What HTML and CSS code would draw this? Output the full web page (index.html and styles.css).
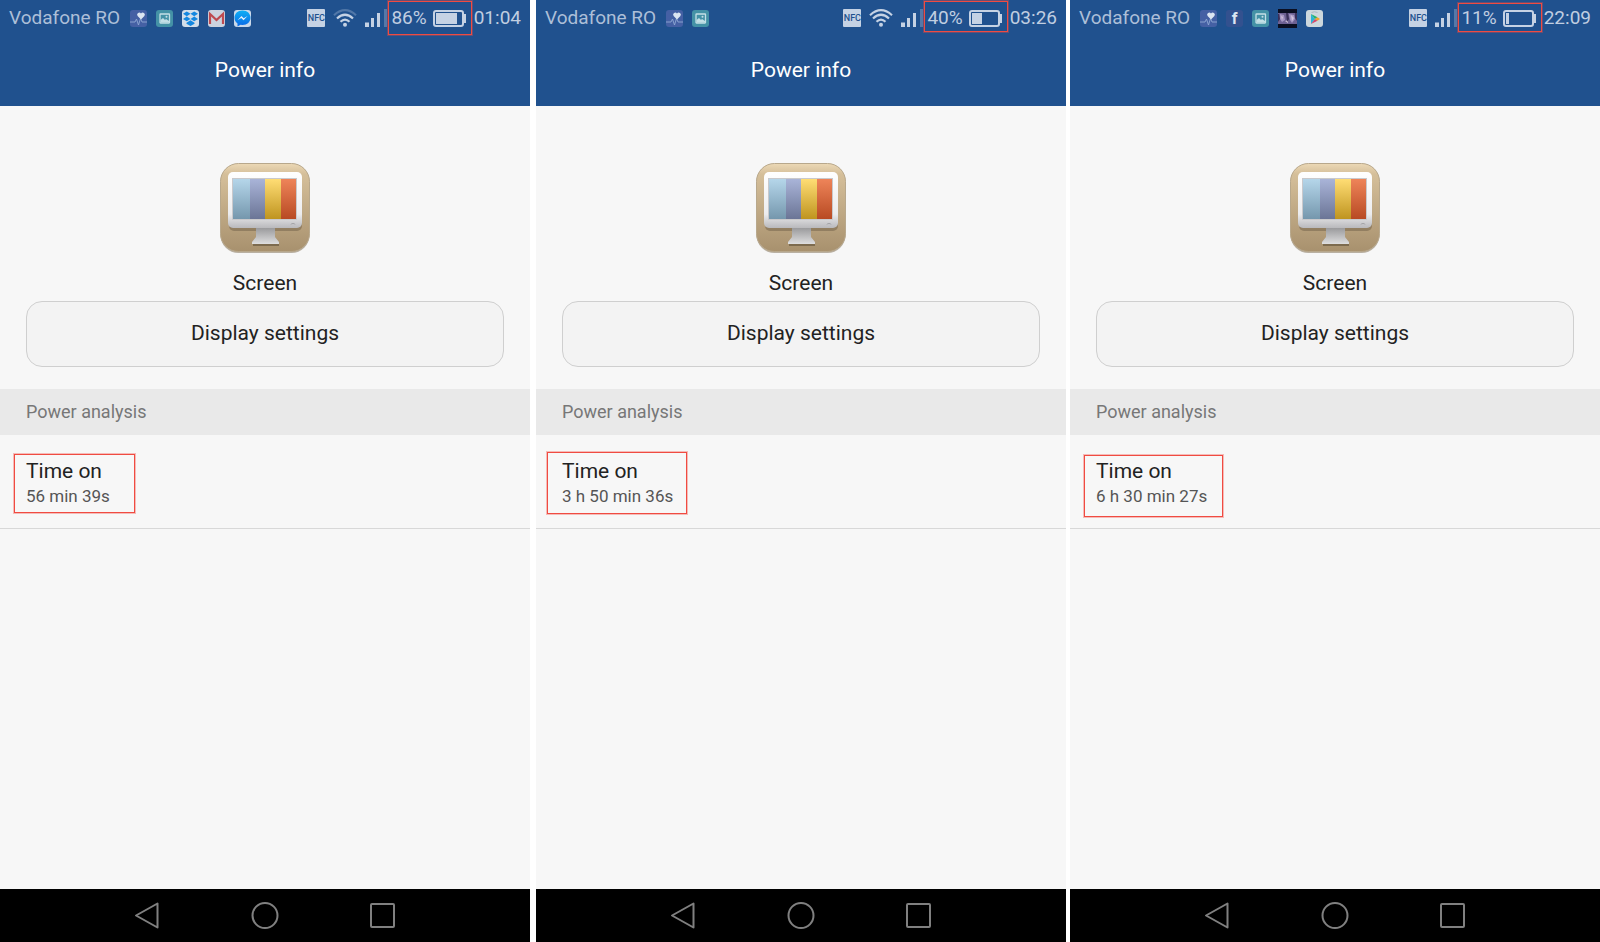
FILE: index.html
```html
<!DOCTYPE html>
<html lang="en">
  <head>
    <meta charset="UTF-8" />
    <meta name="viewport" content="width=device-width, initial-scale=1.0" />
    <title>Power info</title>
    <link rel="stylesheet" href="styles.css">
  </head>
  <body>
    <!-- shared icons -->
    <svg class="defs" aria-hidden="true">
      <defs>
        <linearGradient id="gBeige" x1="0" y1="0" x2="0" y2="1">
          <stop offset="0" stop-color="#ecd9b6" />
          <stop offset="0.12" stop-color="#d5bf9a" />
          <stop offset="1" stop-color="#a8916e" />
        </linearGradient>
        <linearGradient id="gFrame" x1="0" y1="0" x2="0" y2="1">
          <stop offset="0" stop-color="#ffffff" />
          <stop offset="0.75" stop-color="#ececee" />
          <stop offset="1" stop-color="#b9b9bc" />
        </linearGradient>
        <linearGradient id="gStand" x1="0" y1="0" x2="0" y2="1">
          <stop offset="0" stop-color="#9a9a9c" />
          <stop offset="1" stop-color="#dededf" />
        </linearGradient>
        <linearGradient id="gSky" x1="0" y1="0" x2="0" y2="1">
          <stop offset="0" stop-color="#b5d6ea" />
          <stop offset="1" stop-color="#7597ad" />
        </linearGradient>
        <linearGradient id="gViolet" x1="0" y1="0" x2="0" y2="1">
          <stop offset="0" stop-color="#a9b4d8" />
          <stop offset="1" stop-color="#6b7596" />
        </linearGradient>
        <linearGradient id="gYellow" x1="0" y1="0" x2="0" y2="1">
          <stop offset="0" stop-color="#ffdd74" />
          <stop offset="1" stop-color="#bf941f" />
        </linearGradient>
        <linearGradient id="gRed" x1="0" y1="0" x2="0" y2="1">
          <stop offset="0" stop-color="#ee8459" />
          <stop offset="1" stop-color="#b84a23" />
        </linearGradient>
        <linearGradient id="gMessenger" x1="0" y1="0" x2="0" y2="1">
          <stop offset="0" stop-color="#0fb0f5" />
          <stop offset="1" stop-color="#0a68e6" />
        </linearGradient>
      </defs>

      <symbol id="screen" viewBox="0 0 90 90">
        <rect x="0.5" y="1" width="89" height="89" rx="18" fill="#8f8069" opacity="0.6" />
        <rect x="0.5" y="0.5" width="89" height="88" rx="18" fill="url(#gBeige)" stroke="#b8a88c" />
        <rect x="9" y="12" width="73" height="56" rx="5" fill="#6f5f48" opacity="0.5" />
        <rect x="8" y="9" width="74" height="56" rx="5" fill="url(#gFrame)" />
        <rect x="12" y="15" width="65" height="42" fill="#c9c9cc" />
        <rect x="13" y="16" width="17" height="40" fill="url(#gSky)" />
        <rect x="30" y="16" width="15" height="40" fill="url(#gViolet)" />
        <rect x="45" y="16" width="16" height="40" fill="url(#gYellow)" />
        <rect x="61" y="16" width="15" height="40" fill="url(#gRed)" />
        <path d="M71 61.500a2 1 0 0 1 4 0" fill="none" stroke="#a2a2a5" />
        <path d="M33 80h26v3H33z" fill="#5e5039" opacity="0.6" />
        <path d="M36 65h19v9l4 5v2H32v-2l4-5z" fill="url(#gStand)" />
      </symbol>

      <symbol id="health" viewBox="0 0 17 17">
        <rect width="17" height="17" rx="3" fill="#4560a4" />
        <path d="M0 12h5l1.500-3 2 6 2-6.500 1.500 3.500h5" fill="none" stroke="#8fa8d4" stroke-width="0.9" />
        <path d="M11 9.500L7.600 6a2.100 2.100 0 0 1 3.400-2.500A2.100 2.100 0 0 1 14.400 6z" fill="#dce5f2" />
      </symbol>
      <symbol id="gallery" viewBox="0 0 17 17">
        <rect width="17" height="17" rx="3" fill="#4492a6" />
        <rect x="4" y="4" width="9.500" height="9" rx="0.5" fill="none" stroke="#c3dfe6" stroke-width="1.300" />
        <path d="M4.500 12.500V10l2.500-2 2 2 1-1 3 2v1.500z" fill="#c3dfe6" />
        <circle cx="10.500" cy="6.800" r="1" fill="#c3dfe6" />
      </symbol>
      <symbol id="dropbox" viewBox="0 0 17 17">
        <rect width="17" height="17" rx="3" fill="#d3deea" />
        <path d="M4.800 1.500l3.700 2.300-3.700 2.400L1 3.800zM12.200 1.500L16 3.800l-3.800 2.400-3.700-2.400zM4.800 6.600l3.700 2.300-3.700 2.400L1 8.900zM12.200 6.600L16 8.900l-3.800 2.400-3.700-2.400zM8.500 10.200l4 2.500v1l-4 2.300-4-2.300v-1z" fill="#1487e0" />
      </symbol>
      <symbol id="mail" viewBox="0 0 17 17">
        <rect width="17" height="17" rx="3" fill="#ccd3df" />
        <path d="M2 14V4l6.500 6L15 4v10" fill="none" stroke="#be4a50" stroke-width="2.200" />
      </symbol>
      <symbol id="messenger" viewBox="0 0 17 17">
        <rect width="17" height="17" rx="3" fill="#cbd9ea" />
        <path d="M8.500 0.500c4.800 0 8 3.200 8 7.300s-3.200 7.200-8 7.200l-2-.2L3.500 16.500v-3C1.500 12 .5 10.200.5 7.800.5 3.700 3.700.5 8.500.5z" fill="url(#gMessenger)" />
        <path d="M3.500 10.200l4-4.200 2.200 2.200L13.500 6l-4 4.200L7.300 8z" fill="#e6f1fb" />
      </symbol>
      <symbol id="play" viewBox="0 0 17 17">
        <rect width="17" height="17" rx="3" fill="#ccd7dd" />
        <path d="M5.500 2.500q3-1.500 6 0" fill="none" stroke="#aab8c2" />
        <path d="M5 4v10l4-5z" fill="#2bb3d6" />
        <path d="M5 4l4 5 2.500-1.800z" fill="#27b36a" />
        <path d="M5 14l4-5 2.500 1.800z" fill="#d6476b" />
        <path d="M9 9l2.500-1.800L14 9l-2.500 1.800z" fill="#f0a52b" />
      </symbol>
      <symbol id="thumb" viewBox="0 0 19 19">
        <rect width="19" height="19" fill="#0b0f22" />
        <rect y="4" width="19" height="11" fill="#6d6193" />
        <path d="M2 5l4 1 1 5-3 2-2-3zM11 5l5 1 1 4-3 4-2-3z" fill="#a596c2" />
        <path d="M3 7l2 1-1 3zM13 6l3 3-2 3zM7 12l3-1v3z" fill="#d3c3dd" />
        <path d="M0 5h1l1 5-2 3zM8 4h2l1 6-2 3zM17 4h2v8l-2-3z" fill="#3a3059" />
      </symbol>

      <symbol id="wifi" viewBox="0 0 24 18">
        <g fill="none" stroke="#c5d2e4" stroke-width="2.200">
          <path class="wifi-outer" d="M1 6.200q11-10 22 0" />
          <path d="M4 9.500q8-7.500 16 0" />
          <path d="M7.500 12.800q4.500-4.500 9 0" />
        </g>
        <circle cx="12" cy="15.800" r="2" fill="#c5d2e4" />
      </symbol>
      <symbol id="signal" viewBox="0 0 22 18">
        <path d="M0 13.500h4V18H0zM6 9h3v9H6zM12 4h3v14h-3z" fill="#c5d2e4" />
        <path d="M19 0h3v18h-3z" fill="#5578a8" />
      </symbol>

      <symbol id="back" viewBox="0 0 28 28">
        <path d="M24.500 1.500v24L3 13.500z" fill="none" stroke="#808080" stroke-width="2" stroke-linejoin="round" />
      </symbol>
      <symbol id="home" viewBox="0 0 28 28">
        <circle cx="14" cy="13.500" r="12.500" fill="none" stroke="#808080" stroke-width="2" />
      </symbol>
      <symbol id="recent" viewBox="0 0 28 28">
        <rect x="2" y="2" width="23" height="23" rx="1" fill="none" stroke="#808080" stroke-width="2" />
      </symbol>
    </svg>

    <main class="phones">
      <section class="phone">
        <header class="header">
          <div class="status">
            <span class="carrier">Vodafone RO</span>
            <div class="apps">
              <svg class="app"><use href="#health" /></svg>
              <svg class="app"><use href="#gallery" /></svg>
              <svg class="app"><use href="#dropbox" /></svg>
              <svg class="app"><use href="#mail" /></svg>
              <svg class="app"><use href="#messenger" /></svg>
            </div>
            <span class="nfc">NFC</span>
            <svg class="wifi weak"><use href="#wifi" /></svg>
            <svg class="signal"><use href="#signal" /></svg>
            <div class="power">
              <span>86%</span>
              <span class="battery"><span class="charge" style="width: 86%"></span></span>
              <span class="mark tall"></span>
            </div>
            <span class="clock">01:04</span>
          </div>
          <h1>Power info</h1>
        </header>
        <div class="content">
          <svg class="screen-icon"><use href="#screen" /></svg>
          <p class="name">Screen</p>
          <button class="settings">Display settings</button>
          <h2>Power analysis</h2>
          <div class="row">
            <div class="time">
              <p class="label">Time on</p>
              <p class="value">56 min 39s</p>
              <span class="mark first"></span>
            </div>
          </div>
        </div>
        <nav class="nav">
          <button aria-label="Back"><svg><use href="#back" /></svg></button>
          <button aria-label="Home"><svg><use href="#home" /></svg></button>
          <button aria-label="Recent apps"><svg><use href="#recent" /></svg></button>
        </nav>
      </section>

      <section class="phone">
        <header class="header">
          <div class="status">
            <span class="carrier">Vodafone RO</span>
            <div class="apps">
              <svg class="app"><use href="#health" /></svg>
              <svg class="app"><use href="#gallery" /></svg>
            </div>
            <span class="nfc">NFC</span>
            <svg class="wifi"><use href="#wifi" /></svg>
            <svg class="signal"><use href="#signal" /></svg>
            <div class="power">
              <span>40%</span>
              <span class="battery"><span class="charge" style="width: 43%"></span></span>
              <span class="mark"></span>
            </div>
            <span class="clock">03:26</span>
          </div>
          <h1>Power info</h1>
        </header>
        <div class="content">
          <svg class="screen-icon"><use href="#screen" /></svg>
          <p class="name">Screen</p>
          <button class="settings">Display settings</button>
          <h2>Power analysis</h2>
          <div class="row">
            <div class="time">
              <p class="label">Time on</p>
              <p class="value">3 h 50 min 36s</p>
              <span class="mark second"></span>
            </div>
          </div>
        </div>
        <nav class="nav">
          <button aria-label="Back"><svg><use href="#back" /></svg></button>
          <button aria-label="Home"><svg><use href="#home" /></svg></button>
          <button aria-label="Recent apps"><svg><use href="#recent" /></svg></button>
        </nav>
      </section>

      <section class="phone">
        <header class="header">
          <div class="status">
            <span class="carrier">Vodafone RO</span>
            <div class="apps">
              <svg class="app"><use href="#health" /></svg>
              <span class="app facebook">f</span>
              <svg class="app"><use href="#gallery" /></svg>
              <svg class="app thumb"><use href="#thumb" /></svg>
              <svg class="app"><use href="#play" /></svg>
            </div>
            <span class="nfc">NFC</span>
            <svg class="signal"><use href="#signal" /></svg>
            <div class="power">
              <span>11%</span>
              <span class="battery"><span class="charge" style="width: 15%"></span></span>
              <span class="mark low"></span>
            </div>
            <span class="clock">22:09</span>
          </div>
          <h1>Power info</h1>
        </header>
        <div class="content">
          <svg class="screen-icon"><use href="#screen" /></svg>
          <p class="name">Screen</p>
          <button class="settings">Display settings</button>
          <h2>Power analysis</h2>
          <div class="row">
            <div class="time">
              <p class="label">Time on</p>
              <p class="value">6 h 30 min 27s</p>
              <span class="mark third"></span>
            </div>
          </div>
        </div>
        <nav class="nav">
          <button aria-label="Back"><svg><use href="#back" /></svg></button>
          <button aria-label="Home"><svg><use href="#home" /></svg></button>
          <button aria-label="Recent apps"><svg><use href="#recent" /></svg></button>
        </nav>
      </section>
    </main>
  </body>
</html>
```

FILE: styles.css
```css
* {
  box-sizing: border-box;
}
body {
  margin: 0;
  background: white;
  font-family: Roboto, sans-serif;
  color: #222;
}
h1,
h2,
p {
  margin: 0;
  font-weight: normal;
}
button {
  font-family: inherit;
  color: inherit;
  cursor: pointer;
}
svg {
  display: block;
}
.defs {
  position: absolute;
  width: 0;
  height: 0;
}

.phones {
  display: grid;
  grid-template-columns: 1fr 6px 1fr 4px 1fr;
  min-height: 100vh;
}
.phone {
  display: flex;
  flex-direction: column;
  background: #f7f7f7;
}
.phone:nth-child(1) {
  grid-column: 1;
}
.phone:nth-child(2) {
  grid-column: 3;
}
.phone:nth-child(3) {
  grid-column: 5;
}

/* header */
.header {
  height: 106px;
  background: #20518e;
}
.status {
  display: flex;
  align-items: center;
  height: 36px;
  padding: 0 9px;
  font-size: 19px;
  line-height: 24px;
  color: #c0cee1;
}
.carrier {
  color: #adbfd8;
}
.apps {
  display: flex;
  flex: 1;
  align-items: center;
  gap: 9px;
  margin-left: 10px;
}
.app {
  width: 17px;
  height: 17px;
}
.thumb {
  width: 19px;
  height: 19px;
}
.facebook {
  border-radius: 3px;
  background: #33518f;
  color: #dce5f2;
  font-size: 16px;
  font-weight: bold;
  line-height: 17px;
  text-align: center;
}
.nfc {
  width: 18px;
  height: 18px;
  margin-right: 8px;
  border-radius: 1px;
  background: #c5d2e4;
  color: #20518e;
  font-size: 9px;
  font-weight: 500;
  line-height: 18px;
  display: flex;
  justify-content: center;
}
.wifi {
  width: 24px;
  height: 18px;
  margin-right: 8px;
}
.weak {
  --outer: 0.3;
}
.wifi-outer {
  opacity: var(--outer, 1);
}
.signal {
  width: 22px;
  height: 18px;
}
.power {
  position: relative;
  display: flex;
  align-items: center;
  gap: 6px;
  margin: 0 8px 0 4px;
}
.battery {
  position: relative;
  width: 31px;
  height: 17px;
  margin-right: 2px;
  padding: 1px;
  border: 2px solid #c5d2e4;
  border-radius: 3px;
}
.battery::after {
  content: "";
  position: absolute;
  top: 2px;
  right: -4px;
  width: 2px;
  height: 9px;
  background: #c5d2e4;
}
.charge {
  display: block;
  height: 100%;
  background: #c5d2e4;
}

h1 {
  font-size: 21px;
  line-height: 68px;
  text-align: center;
  color: white;
}

/* content */
.content {
  display: flex;
  flex: 1;
  flex-direction: column;
  padding-top: 57px;
}
.screen-icon {
  width: 90px;
  height: 90px;
  margin: 0 auto;
}
.name {
  padding: 18px 0 6px;
  font-size: 21px;
  line-height: 24px;
  text-align: center;
}
.settings {
  height: 66px;
  margin: 0 26px 22px;
  padding: 0 0 3px;
  border: 1px solid #cfcfcf;
  border-radius: 16px;
  background: #f3f3f3;
  font-size: 21px;
}
h2 {
  padding: 0 26px;
  background: #e9e9e9;
  font-size: 18px;
  line-height: 46px;
  color: #777;
}
.row {
  display: flex;
  padding: 23px 26px 19px;
  border-bottom: 1px solid #d8d8d8;
}
.time {
  position: relative;
}
.label {
  font-size: 21px;
  line-height: 26px;
}
.value {
  font-size: 17px;
  line-height: 25px;
  color: #555;
}

/* red boxes around the readings */
.mark {
  position: absolute;
  inset: -5px -6px -2px -3px;
  border: 1px solid #f04b41;
  box-shadow: 0 0 0 1px rgba(240, 75, 65, 0.35);
  pointer-events: none;
}
.tall {
  bottom: -5px;
}
.low {
  top: -3px;
}
.first {
  inset: -4px -25px -4px -12px;
}
.second {
  inset: -6px -14px -5px -15px;
}
.third {
  inset: -3px -16px -8px -12px;
}

/* bottom bar */
.nav {
  display: flex;
  justify-content: center;
  align-items: center;
  gap: 90px;
  height: 53px;
  background: black;
}
.nav button {
  padding: 0;
  border: 0;
  background: none;
}
.nav svg {
  width: 28px;
  height: 28px;
}
```
